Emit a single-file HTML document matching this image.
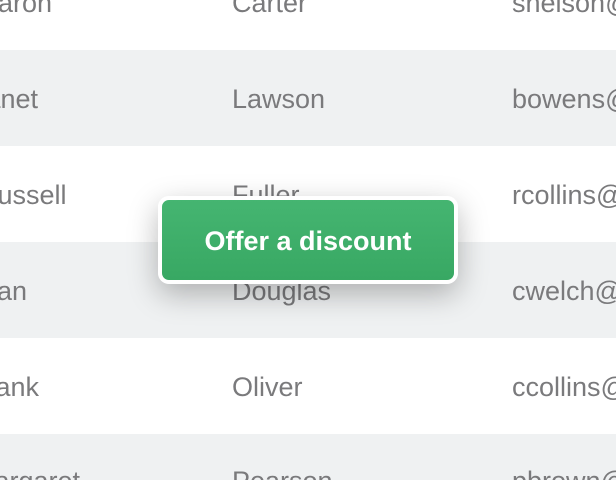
<!DOCTYPE html>
<html><head><style>
html,body{margin:0;padding:0;width:616px;height:480px;overflow:hidden;background:#fff;}
body{position:relative;font-family:"Liberation Sans",sans-serif;}
.row{position:absolute;left:0;width:616px;height:96px;}
.g{background:#eff1f2;}
.t{position:absolute;font-size:27px;color:#7a7a7c;line-height:30px;white-space:nowrap;}
.c1{left:-28px}.c2{left:232px}.c3{left:512px}
.btn{position:absolute;left:158px;top:196px;width:292px;height:80px;border:4px solid #fff;border-radius:11px;background:linear-gradient(#45b571,#38a863);box-shadow:0 10px 30px rgba(0,0,0,0.28);color:#fff;font-weight:bold;font-size:27px;text-align:center;line-height:82px;}
</style></head><body>
<div class="row" style="top:-46px"></div>
<div class="row g" style="top:50px"></div>
<div class="row" style="top:146px"></div>
<div class="row g" style="top:242px"></div>
<div class="row" style="top:338px"></div>
<div class="row g" style="top:434px;height:46px"></div>

<div class="t c1" style="top:-12px;left:-35px">Sharon</div><div class="t c2" style="top:-12px">Carter</div><div class="t c3" style="top:-12px">shelson@</div>
<div class="t c1" style="top:84px">Janet</div><div class="t c2" style="top:84px">Lawson</div><div class="t c3" style="top:84px">bowens@</div>
<div class="t c1" style="top:180px;left:-22px">Russell</div><div class="t c2" style="top:180px">Fuller</div><div class="t c3" style="top:180px">rcollins@</div>
<div class="t c1" style="top:276px;left:-36px">Ryan</div><div class="t c2" style="top:276px">Douglas</div><div class="t c3" style="top:276px">cwelch@</div>
<div class="t c1" style="top:372px;left:-30px">Frank</div><div class="t c2" style="top:372px">Oliver</div><div class="t c3" style="top:372px">ccollins@</div>
<div class="t c1" style="top:466px;left:-28px">Margaret</div><div class="t c2" style="top:466px">Pearson</div><div class="t c3" style="top:466px">pbrown@</div>

<div class="btn">Offer a discount</div>
</body></html>
